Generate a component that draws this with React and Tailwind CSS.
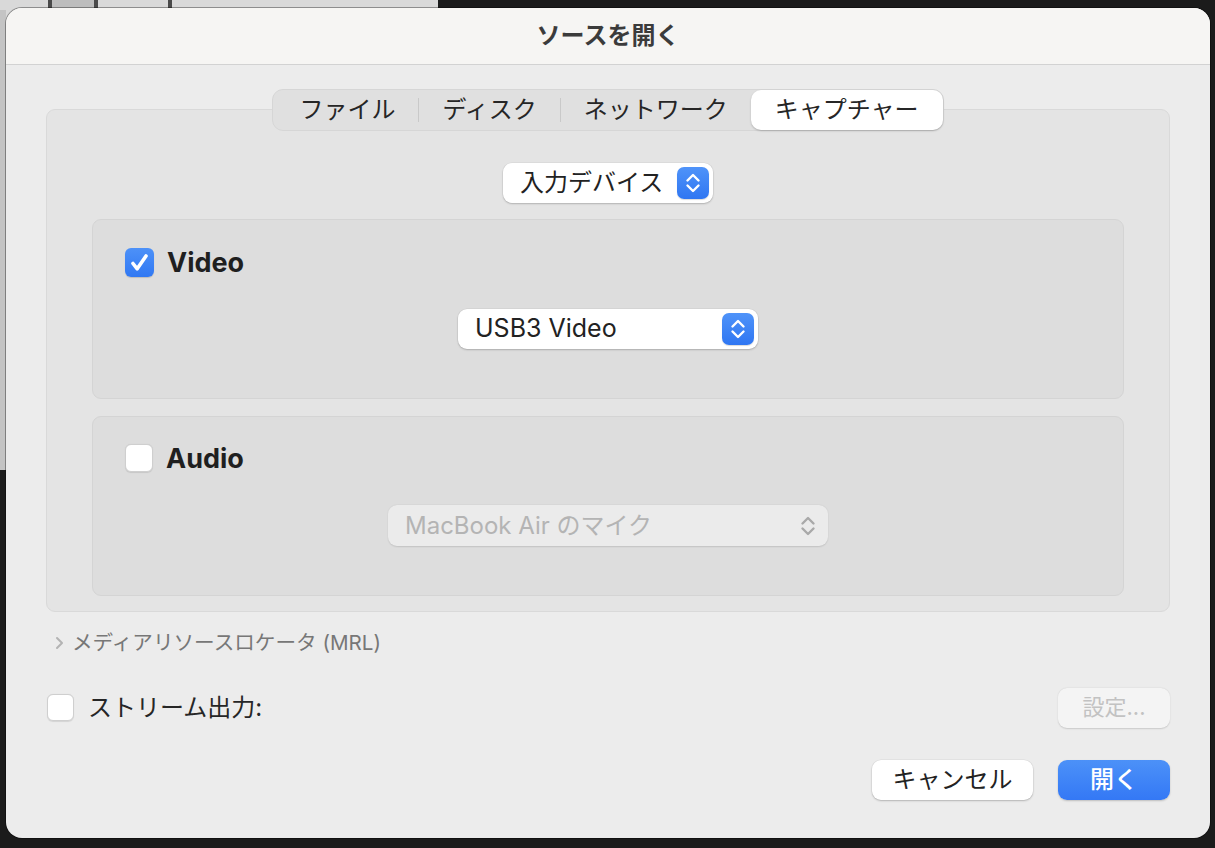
import React from "react";

const font = "font-['Inter','Noto_Sans_CJK_JP',sans-serif]";

function Stepper({ disabled }) {
  return (
    <div
      className={
        disabled
          ? "flex h-[32px] w-[32px] items-center justify-center"
          : "flex h-[32px] w-[32px] items-center justify-center rounded-[7px] bg-gradient-to-b from-[#4f93f9] to-[#2f76f2] shadow-[0_1px_1px_rgba(0,0,0,0.15)]"
      }
    >
      <svg width="16" height="26" viewBox="0 0 16 26" fill="none" stroke={disabled ? "#a9a9a9" : "#ffffff"} strokeWidth="2.4" strokeLinecap="round" strokeLinejoin="round">
        <path d="M2.5 10.5L8 5l5.5 5.5" />
        <path d="M2.5 15.5L8 21l5.5-5.5" />
      </svg>
    </div>
  );
}

function Popup({ label, width, disabled, textClass }) {
  return (
    <div
      className={
        disabled
          ? "flex h-[41px] items-center justify-between rounded-[9px] bg-[#ebebeb] pl-[17px] pr-[4px] shadow-[0_0.5px_1.5px_rgba(0,0,0,0.12)]"
          : "flex h-[40px] items-center justify-between rounded-[9px] bg-white pl-[17px] pr-[4px] shadow-[0_1px_2px_rgba(0,0,0,0.2),0_0_0_0.5px_rgba(0,0,0,0.06)]"
      }
      style={{ width }}
    >
      <span className={textClass}>{label}</span>
      <Stepper disabled={disabled} />
    </div>
  );
}

function Checkbox({ checked, size = 29 }) {
  if (checked) {
    return (
      <div className="flex h-[29px] w-[29px] items-center justify-center rounded-[6px] bg-gradient-to-b from-[#4d91f8] to-[#3078f3] shadow-[0_1px_1px_rgba(0,0,0,0.15)]">
        <svg width="29" height="29" viewBox="0 0 29 29" fill="none" stroke="#fff" strokeWidth="3.6" strokeLinecap="round" strokeLinejoin="round">
          <path d="M8 15.5l4.2 5.3L21 8" />
        </svg>
      </div>
    );
  }
  return (
    <div
      className="rounded-[6px] border border-[#cfcfcf] bg-white shadow-[0_0.5px_1px_rgba(0,0,0,0.1)]"
      style={{ width: size, height: size }}
    />
  );
}

function Divider() {
  return <div className="h-[24px] w-px bg-[#c9c9c9]" />;
}

export default function App() {
  return (
    <div className={`relative h-[848px] w-[1215px] overflow-hidden bg-[#1b1b1b] pl-[6px] pt-[8px] ${font}`}>
      {/* window behind the dialog */}
      <div className="absolute left-0 top-0 h-[470px] w-[438px] bg-[#d9d9d9]">
        <div className="absolute left-[48px] top-0 h-[10px] w-[4px] bg-[#4a4a4a]" />
        <div className="absolute left-[52px] top-0 h-[10px] w-[42px] bg-[#bdbdbd]" />
        <div className="absolute left-[94px] top-0 h-[10px] w-[4px] bg-[#4a4a4a]" />
        <div className="absolute left-[168px] top-0 h-[10px] w-[4px] bg-[#4a4a4a]" />
        <div className="absolute left-0 top-[10px] h-[460px] w-[6px] bg-[#c4c4c4]" />
      </div>

      <div className="relative flex h-[830px] w-[1204px] flex-col overflow-hidden rounded-[16px] bg-[#ececec] shadow-[0_0_0_1px_rgba(0,0,0,0.35)]">
        {/* title bar */}
        <div className="flex h-[57px] items-center justify-center border-b border-[#d2d2d2] bg-[#f6f5f3]">
          <span className="text-[24px] font-bold text-[#3b3b3b]">ソースを開く</span>
        </div>

        <div className="flex flex-col px-[40px] pt-[24px]">
          {/* tabs */}
          <div className="relative z-10 flex justify-center">
            <div className="flex h-[42px] items-center rounded-[11px] border border-[#d6d6d6] bg-[#e0e0e0] text-[24px] text-[#262626]">
              <div className="pl-[26px] pr-[23px]">ファイル</div>
              <Divider />
              <div className="px-[23px]">ディスク</div>
              <Divider />
              <div className="pl-[23px] pr-[23px]">ネットワーク</div>
              <div className="flex h-[40px] items-center rounded-[10px] bg-white px-[24px] shadow-[0_1px_2px_rgba(0,0,0,0.22)]">
                キャプチャー
              </div>
            </div>
          </div>

          {/* group box */}
          <div className="-mt-[22px] flex flex-col items-center rounded-[9px] border border-[#d9d9d9] bg-[#e4e4e4] px-[45px] pb-[15px] pt-[53px]">
            <Popup label="入力デバイス" width={210} textClass="text-[24px] text-[#222]" />

            <div className="mt-[16px] flex h-[180px] w-full flex-col rounded-[9px] border border-[#d4d4d4] bg-[#dddddd] px-[32px] pt-[28px]">
              <div className="flex h-[29px] items-center gap-[13px]">
                <Checkbox checked />
                <span className="text-[27px] font-bold leading-none text-[#1f1f1f]">Video</span>
              </div>
              <div className="mt-[32px] flex justify-center">
                <Popup label="USB3 Video" width={300} textClass="text-[25px] text-[#222]" />
              </div>
            </div>

            <div className="mt-[17px] flex h-[180px] w-full flex-col rounded-[9px] border border-[#d4d4d4] bg-[#dddddd] px-[32px] pt-[27px]">
              <div className="flex h-[28px] items-center gap-[13px]">
                <Checkbox size={28} />
                <span className="text-[27px] font-bold leading-none text-[#1f1f1f]">Audio</span>
              </div>
              <div className="mt-[33px] flex justify-center">
                <Popup label="MacBook Air のマイク" width={440} disabled textClass="text-[24px] text-[#b4b4b4]" />
              </div>
            </div>
          </div>

          {/* MRL */}
          <div className="mt-[16px] flex items-center gap-[8px] pl-[9px]">
            <svg width="9" height="14" viewBox="0 0 9 14" fill="none" stroke="#b3b3b3" strokeWidth="2" strokeLinecap="round" strokeLinejoin="round">
              <path d="M2 2l5 5-5 5" />
            </svg>
            <span className="text-[20.6px] text-[#777777]">メディアリソースロケータ (MRL)</span>
          </div>

          {/* stream output */}
          <div className="mt-[29px] flex h-[40px] items-center justify-between">
            <div className="flex items-center gap-[14px] pl-px">
              <Checkbox size={27} />
              <span className="text-[24px] text-[#262626]">ストリーム出力:</span>
            </div>
            <div className="flex h-[40px] w-[112px] items-center justify-center rounded-[9px] bg-[#f4f4f4] text-[22px] text-[#c2c2c2] shadow-[0_0.5px_1.5px_rgba(0,0,0,0.15)]">
              設定...
            </div>
          </div>

          {/* buttons */}
          <div className="mt-[32px] flex justify-end gap-[25px]">
            <div className="flex h-[40px] w-[161px] items-center justify-center rounded-[9px] bg-white text-[24px] text-[#222] shadow-[0_1px_2px_rgba(0,0,0,0.22),0_0_0_0.5px_rgba(0,0,0,0.06)]">
              キャンセル
            </div>
            <div className="flex h-[40px] w-[112px] items-center justify-center rounded-[9px] bg-gradient-to-b from-[#4c91f8] to-[#3478f5] text-[24px] font-medium text-white shadow-[0_1px_2px_rgba(0,0,0,0.2)]">
              開く
            </div>
          </div>
        </div>
      </div>
    </div>
  );
}
